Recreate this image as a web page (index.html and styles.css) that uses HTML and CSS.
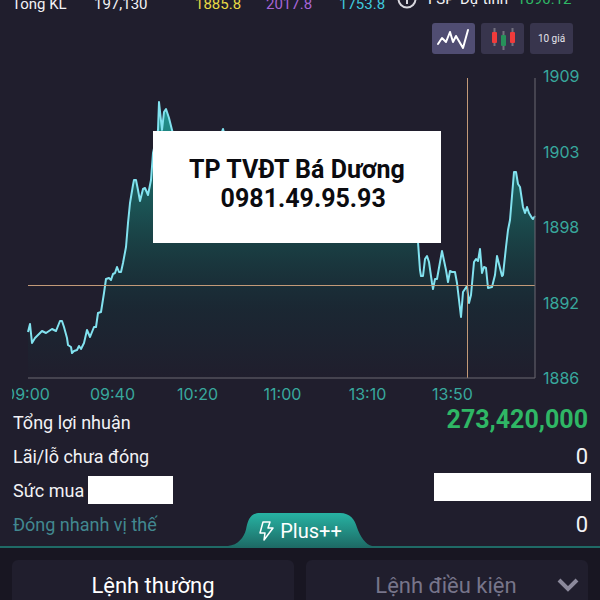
FILE: index.html
```html
<!DOCTYPE html>
<html lang="vi">
<head>
    <meta charset="UTF-8">
    <meta name="viewport" content="width=device-width, initial-scale=1.0">
    <title>Phái sinh</title>
    <link rel="stylesheet" href="styles.css">
</head>
<body>
    <div class="ticker">
        <span>Tổng KL</span>
        <span>197,130</span>
        <span class="ref">1885.8</span>
        <span class="ceil">2017.8</span>
        <span class="floor">1753.8</span>
        <svg class="info" viewBox="0 0 20 20">
            <circle cx="10" cy="10" r="8.5" fill="none" stroke="#d8d7de" stroke-width="2"/>
            <path d="M10 5v2M10 9v6" stroke="#d8d7de" stroke-width="2"/>
        </svg>
        <span class="expected">FSP</span>
        <span class="expected">Dự tính</span>
        <span class="expected up">1890.12</span>
    </div>

    <div class="chart-tools">
        <button class="tool active" aria-label="Biểu đồ đường">
            <svg width="43" height="31" viewBox="0 0 43 31" fill="none" stroke="#fff" stroke-width="2" stroke-linecap="round" stroke-linejoin="round">
                <path d="M6 21L10 15L14 19L18 9L21 19L24 13L31 25L36 7"/>
            </svg>
        </button>
        <button class="tool" aria-label="Biểu đồ nến">
            <svg width="43" height="31" viewBox="0 0 43 31">
                <path d="M13.500 5v18M22.500 8v19M31.500 5v18" stroke="#74727f" stroke-width="2"/>
                <rect x="11" y="9" width="5" height="11" rx="1" fill="#ef3b3b"/>
                <rect x="20" y="12" width="5" height="11" rx="1" fill="#27915a"/>
                <rect x="29" y="9" width="5" height="11" rx="1" fill="#ef3b3b"/>
            </svg>
        </button>
        <button class="tool">10 giá</button>
    </div>

    <div class="chart">
        <svg class="plot" viewBox="28 78 507 300" preserveAspectRatio="none">
            <defs>
                <linearGradient id="area" gradientUnits="userSpaceOnUse" x1="0" y1="102" x2="0" y2="378">
                    <stop offset="0" stop-color="#22a39d" stop-opacity="0.95"/>
                    <stop offset="0.3" stop-color="#1b6f6b" stop-opacity="0.8"/>
                    <stop offset="0.5" stop-color="#17504f" stop-opacity="0.7"/>
                    <stop offset="0.75" stop-color="#12353b" stop-opacity="0.4"/>
                    <stop offset="1" stop-color="#12353b" stop-opacity="0"/>
                </linearGradient>
            </defs>
            <path id="fill" fill="url(#area)"/>
            <path id="line" class="line"/>
            <path class="cross" d="M28 285.500H535M467.500 78V378"/>
            <path class="axis" d="M28 378H535V78"/>
        </svg>
        <div class="y-axis">
            <span>1909</span>
            <span>1903</span>
            <span>1898</span>
            <span>1892</span>
            <span>1886</span>
        </div>
        <div class="contact">
            <span>TP TVĐT Bá Dương</span>
            <span>  0981.49.95.93</span>
        </div>
    </div>
    <div class="x-axis">
        <div class="x-labels">
            <span>09:00</span>
            <span>09:40</span>
            <span>10:20</span>
            <span>11:00</span>
            <span>13:10</span>
            <span>13:50</span>
        </div>
    </div>

    <div class="summary">
        <div class="row">
            <span>Tổng lợi nhuận</span>
            <span class="profit">273,420,000</span>
        </div>
        <div class="row">
            <span>Lãi/lỗ chưa đóng</span>
            <span class="value">0</span>
        </div>
        <div class="row">
            <span>Sức mua</span>
            <span class="mask mask-small"></span>
            <span class="mask mask-large"></span>
        </div>
        <div class="row">
            <a href="#">Đóng nhanh vị thế</a>
            <span class="value">0</span>
        </div>
    </div>

    <div class="order-bar">
        <button class="plus">
            <svg class="plus-shape" viewBox="0 0 144 36" preserveAspectRatio="none">
                <defs>
                    <linearGradient id="tab" x1="0" y1="0" x2="0" y2="1">
                        <stop offset="0" stop-color="#27b3a3"/>
                        <stop offset="1" stop-color="#1d6964"/>
                    </linearGradient>
                </defs>
                <path d="M0 36V34C10 33 16 25 18 17C20 7 22 0 32 0H112C122 0 127 7 129 15C132 24 138 33 144 34V36Z" fill="url(#tab)"/>
            </svg>
            <svg class="bolt" width="16" height="20" viewBox="0 0 16 20" fill="none" stroke="#fff" stroke-width="1.5" stroke-linejoin="round">
                <path d="M5 1H12L10 7H15L6 19L7 12H2Z"/>
            </svg>
            <span>Plus++</span>
        </button>
        <button class="order">Lệnh thường</button>
        <button class="order muted">
            <span>Lệnh điều kiện</span>
            <svg width="22" height="14" viewBox="0 0 22 14" fill="none" stroke="#8b899b" stroke-width="4">
                <path d="M2 2L11 11L20 2"/>
            </svg>
        </button>
    </div>

    <script src="chart.js"></script>
</body>
</html>
```
FILE: chart.js
```js
// x,y of each tick on the price line
var points = [
    [28,332],[30,324],[32,343],[35,338],[39,334],[42,331],[46,333],[52,329],[56,331],[60,321],
    [62,321],[64,327],[67,338],[68,345],[71,347],[72,353],[74,351],[77,350],[79,346],[81,349],
    [84,343],[87,330],[90,337],[94,327],[96,327],[98,313],[101,312],[104,293],[106,279],[109,278],
    [111,280],[113,274],[115,273],[117,267],[119,272],[121,272],[123,263],[126,247],[128,223],[130,203],
    [133,185],[134,180],[136,180],[138,190],[140,201],[143,189],[145,188],[148,195],[151,180],[153,153],
    [158,130],[159,102],[162,130],[164,112],[166,109],[169,118],[172,130],[180,160],[215,150],[223,129],
    [229,150],[412,170],[418,242],[420,270],[421,276],[423,276],[425,259],[427,256],[429,262],[432,283],
    [433,289],[435,279],[437,279],[442,251],[446,270],[448,282],[450,271],[452,272],[455,272],[457,283],
    [461,317],[463,292],[467,286],[469,303],[471,295],[474,262],[476,259],[478,261],[480,249],[482,273],
    [484,267],[486,268],[488,288],[492,287],[495,275],[497,256],[500,268],[502,276],[503,275],[506,247],
    [508,230],[510,220],[514,172],[516,172],[518,184],[520,187],[523,207],[525,213],[527,207],[529,213],
    [532,218],[533,219],[535,216]
];

var path = "M" + points.join("L");
document.getElementById("line").setAttribute("d", path);
document.getElementById("fill").setAttribute("d", path + "V378H28Z");
```
FILE: styles.css
```css
* {
    box-sizing: border-box;
}

body {
    margin: 0;
    height: 100vh;
    overflow: hidden;
    display: flex;
    flex-direction: column;
    background-color: #201e2d;
    color: #f2f2f5;
    font-family: Roboto, sans-serif;
    font-size: 18px;
}

button {
    border: none;
    padding: 0;
    color: #fff;
    font-family: inherit;
    cursor: pointer;
}

/* price strip, scrolled half out of view */
.ticker {
    display: grid;
    grid-template-columns: 82px 101px 71px 73px 58px 31px 32px 57px auto;
    align-content: end;
    align-items: end;
    height: 13px;
    padding-left: 12px;
    flex-shrink: 0;
    font-size: 15px;
    line-height: 18px;
    white-space: nowrap;
}

.ticker .ref { color: #e8d945; }
.ticker .ceil { color: #a765d6; }
.ticker .floor { color: #3fc8dc; }
.ticker .up { color: #2fb765; }

.ticker .expected {
    padding-bottom: 5px;
}

.info {
    width: 20px;
    height: 20px;
    margin-bottom: 4px;
}

.chart-tools {
    display: flex;
    justify-content: flex-end;
    gap: 6px;
    padding: 10px 27px 0 0;
    flex-shrink: 0;
}

.tool {
    display: flex;
    align-items: center;
    justify-content: center;
    width: 43px;
    height: 31px;
    border-radius: 3px;
    background-color: #38354d;
    color: #e4e3ea;
    font-size: 10px;
}

.tool.active {
    background-color: #504d72;
}

.chart {
    position: relative;
    display: flex;
    height: 300px;
    margin: 24px 0 0 28px;
    flex-shrink: 0;
}

.plot {
    flex: 1;
    min-width: 0;
    height: 300px;
    overflow: visible;
}

.line {
    fill: none;
    stroke: #82e2ef;
    stroke-width: 2;
    stroke-linejoin: round;
}

.cross {
    fill: none;
    stroke: #c29a78;
}

.axis {
    fill: none;
    stroke: #6a6873;
}

.y-axis {
    display: flex;
    flex-direction: column;
    justify-content: space-between;
    width: 65px;
    margin: -12px 0 -10px;
    padding-left: 8px;
    color: #38a89d;
    font-family: Inter, sans-serif;
    font-size: 16px;
    line-height: 20px;
}

.contact {
    position: absolute;
    top: 53px;
    left: 125px;
    display: flex;
    flex-direction: column;
    width: 288px;
    height: 112px;
    padding-top: 24px;
    background-color: #fff;
    color: #0b0b0f;
    font-size: 25px;
    font-weight: bold;
    line-height: 29px;
    text-align: center;
    white-space: pre;
}

.x-axis {
    height: 27px;
    margin-left: 12px;
    padding-top: 6px;
    overflow: hidden;
    flex-shrink: 0;
}

.x-labels {
    display: grid;
    grid-template-columns: repeat(6, 85px);
    margin-left: -27px;
    color: #38a89d;
    font-family: Inter, sans-serif;
    font-size: 16px;
    line-height: 20px;
    text-align: center;
}

.summary {
    padding: 0 12px 0 13px;
}

.row {
    display: flex;
    align-items: center;
    height: 34px;
}

.row a {
    color: #428890;
    text-decoration: none;
}

.value {
    margin-left: auto;
    font-size: 22px;
}

.profit {
    align-self: flex-start;
    margin-left: auto;
    color: #2fb765;
    font-size: 25px;
    font-weight: bold;
}

.mask {
    height: 28px;
    background-color: #fff;
}

.mask-small {
    width: 85px;
    margin-left: 4px;
}

.mask-large {
    align-self: flex-start;
    width: 157px;
    margin: 0 -3px 0 auto;
}

.order-bar {
    position: relative;
    display: grid;
    grid-template-columns: 1fr 1fr;
    gap: 12px;
    flex: 1;
    margin-top: 5px;
    padding: 12px 12px 0;
    border-top: 2px solid #1f6a66;
    background-color: #181622;
}

.plus {
    position: absolute;
    left: 50%;
    bottom: 100%;
    display: flex;
    align-items: center;
    justify-content: center;
    gap: 6px;
    width: 144px;
    height: 35px;
    transform: translateX(-50%);
    background: none;
    font-size: 20px;
}

.plus-shape {
    position: absolute;
    inset: 0;
    width: 100%;
    height: 100%;
}

.bolt,
.plus span {
    position: relative;
}

.order {
    display: flex;
    align-items: center;
    justify-content: center;
    height: 50px;
    border-radius: 6px;
    background-color: #201e2d;
    font-size: 22px;
}

.order.muted {
    gap: 40px;
    padding-left: 60px;
    color: #77758a;
}
```
